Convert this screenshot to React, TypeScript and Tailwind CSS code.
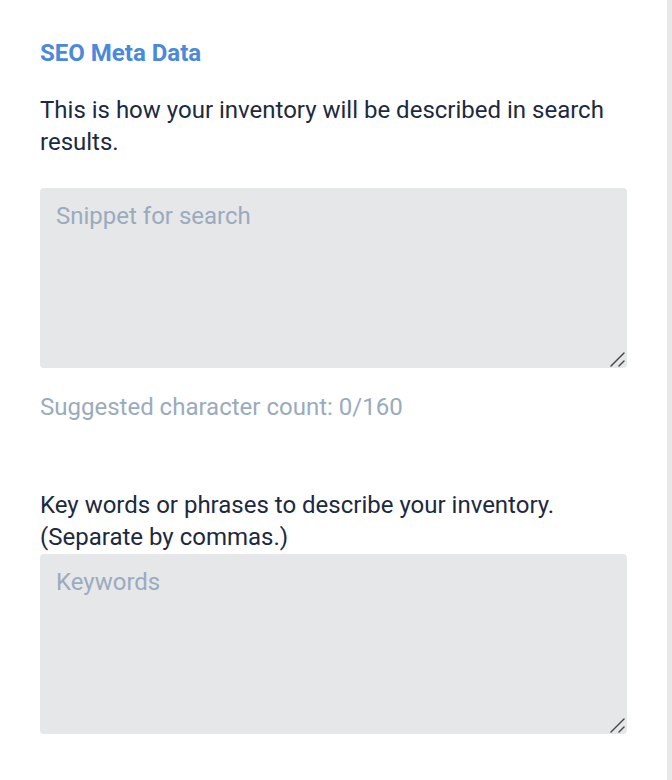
import React, { useState } from "react";

function ResizeGrip() {
  return (
    <svg
      className="pointer-events-none absolute bottom-[1px] right-[2px]"
      width="16"
      height="16"
      viewBox="0 0 16 16"
      fill="none"
    >
      <path d="M2 15 L15 2" stroke="#4a4a4a" strokeWidth="1.5" strokeLinecap="round" />
      <path d="M10 15 L15 10" stroke="#4a4a4a" strokeWidth="1.5" strokeLinecap="round" />
    </svg>
  );
}

export default function App() {
  const [snippet, setSnippet] = useState("");
  const [keywords, setKeywords] = useState("");

  return (
    <div
      className="flex min-h-[780px] w-[672px] bg-white"
      style={{ fontFamily: "Roboto, 'Noto Sans', sans-serif" }}
    >
      {/* Form column */}
      <div className="w-[667px] px-10 pt-[37px]">
        <h2 className="text-[24px] font-bold leading-8 text-[#4a89dc]">SEO Meta Data</h2>

        <p className="mt-[25px] text-[24px] leading-8 text-[#1b2a40]">
          This is how your inventory will be described in search results.
        </p>

        <div className="relative mt-[30px] w-[587px]">
          <textarea
            value={snippet}
            onChange={(e) => setSnippet(e.target.value)}
            placeholder="Snippet for search"
            className="block h-[180px] w-full resize-none rounded bg-[#e6e7e9] px-4 py-3 text-[24px] leading-8 text-[#1b2a40] outline-none placeholder:text-[#9aabbe]"
          />
          <ResizeGrip />
        </div>

        <p className="mt-[23px] text-[24px] leading-8 text-[#9aabbe]">
          Suggested character count: {snippet.length}/160
        </p>

        <p className="mt-[66px] text-[24px] leading-8 text-[#1b2a40]">
          Key words or phrases to describe your inventory. (Separate by commas.)
        </p>

        <div className="relative mt-px w-[587px]">
          <textarea
            value={keywords}
            onChange={(e) => setKeywords(e.target.value)}
            placeholder="Keywords"
            className="block h-[180px] w-full resize-none rounded bg-[#e6e7e9] px-4 py-3 text-[24px] leading-8 text-[#1b2a40] outline-none placeholder:text-[#9aabbe]"
          />
          <ResizeGrip />
        </div>
      </div>

      {/* Right edge strip */}
      <div className="w-[5px] shrink-0 bg-[#e8e8e8]" />
    </div>
  );
}
